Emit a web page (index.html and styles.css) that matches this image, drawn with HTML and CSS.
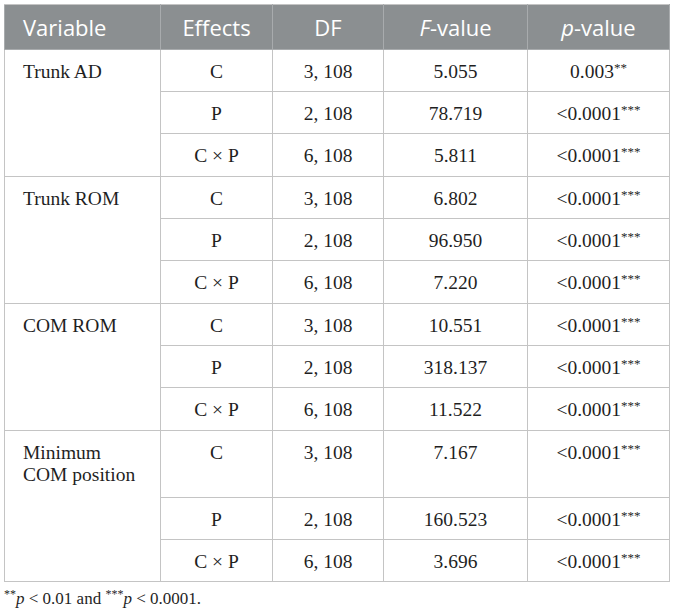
FILE: index.html
```html
<!DOCTYPE html>
<html lang="en">
<head>
    <meta charset="UTF-8">
    <title>ANOVA results</title>
    <link rel="stylesheet" href="styles.css">
</head>
<body>
    <table class="results">
        <colgroup>
            <col class="col-var">
            <col class="col-eff">
            <col class="col-df">
            <col class="col-f">
            <col class="col-p">
        </colgroup>
        <thead>
            <tr>
                <th class="first">Variable</th>
                <th>Effects</th>
                <th>DF</th>
                <th><i>F</i>-value</th>
                <th><i>p</i>-value</th>
            </tr>
        </thead>
        <tbody>
            <tr>
                <td class="first" rowspan="3">Trunk AD</td>
                <td>C</td><td>3, 108</td><td>5.055</td><td>0.003<sup>**</sup></td>
            </tr>
            <tr><td>P</td><td>2, 108</td><td>78.719</td><td>&lt;0.0001<sup>***</sup></td></tr>
            <tr class="end"><td>C &times; P</td><td>6, 108</td><td>5.811</td><td>&lt;0.0001<sup>***</sup></td></tr>

            <tr>
                <td class="first" rowspan="3">Trunk ROM</td>
                <td>C</td><td>3, 108</td><td>6.802</td><td>&lt;0.0001<sup>***</sup></td>
            </tr>
            <tr><td>P</td><td>2, 108</td><td>96.950</td><td>&lt;0.0001<sup>***</sup></td></tr>
            <tr class="end"><td>C &times; P</td><td>6, 108</td><td>7.220</td><td>&lt;0.0001<sup>***</sup></td></tr>

            <tr>
                <td class="first" rowspan="3">COM ROM</td>
                <td>C</td><td>3, 108</td><td>10.551</td><td>&lt;0.0001<sup>***</sup></td>
            </tr>
            <tr><td>P</td><td>2, 108</td><td>318.137</td><td>&lt;0.0001<sup>***</sup></td></tr>
            <tr class="end"><td>C &times; P</td><td>6, 108</td><td>11.522</td><td>&lt;0.0001<sup>***</sup></td></tr>

            <tr class="tall">
                <td class="first" rowspan="3">Minimum<br>COM position</td>
                <td>C</td><td>3, 108</td><td>7.167</td><td>&lt;0.0001<sup>***</sup></td>
            </tr>
            <tr><td>P</td><td>2, 108</td><td>160.523</td><td>&lt;0.0001<sup>***</sup></td></tr>
            <tr><td>C &times; P</td><td>6, 108</td><td>3.696</td><td>&lt;0.0001<sup>***</sup></td></tr>
        </tbody>
    </table>
    <p class="note"><sup>**</sup><i>p</i> &lt; 0.01 and <sup>***</sup><i>p</i> &lt; 0.0001.</p>
</body>
</html>
```

FILE: styles.css
```css
body {
    margin: 0;
    padding: 4px 5px 0 4px;
    background: #fff;
    color: #1f1f1f;
    font-family: "Liberation Serif", serif;
}

.results {
    border-collapse: collapse;
    width: 665px;
    table-layout: fixed;
    border: 1px solid #c4c4c4;
}

.col-var { width: 156px; }
.col-eff { width: 112px; }
.col-df  { width: 111px; }
.col-f   { width: 144px; }
.col-p   { width: 142px; }

.results th,
.results td {
    border: 1px solid #c4c4c4;
    text-align: center;
    vertical-align: top;
    white-space: nowrap;
}

.results th {
    background: #8b8f91;
    color: #fff;
    font-family: "Open Sans", sans-serif;
    font-weight: 400;
    font-size: 22px;
    line-height: 26px;
    padding: 9px 4px;
    border-color: #a8abad;
    border-top-color: #c4c4c4;
}

.results td {
    font-size: 19.5px;
    line-height: 22px;
    padding: 11px 4px 8px;
}

.results tr.end td {
    padding-bottom: 9px;
}

.results .first {
    text-align: left;
    padding-left: 18px;
}

.results tr.tall td {
    padding-bottom: 33px;
}

.results tr.tall td.first {
    padding-bottom: 0;
}

.results sup {
    font-size: 13px;
    line-height: 0;
    vertical-align: 6px;
}

.note {
    margin: 6px 0 0;
    font-size: 17px;
    line-height: 22px;
}

.note sup {
    font-size: 12px;
    line-height: 0;
    vertical-align: 6px;
}
```
